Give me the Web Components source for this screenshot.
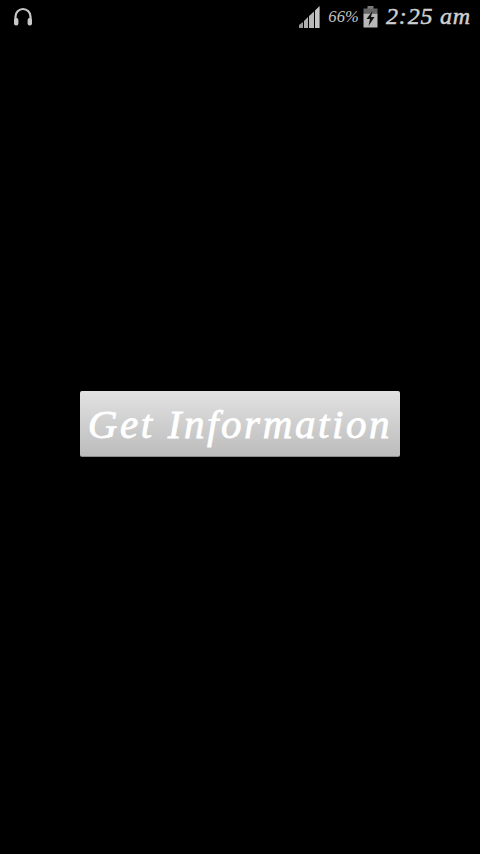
<!DOCTYPE html>
<html>
<head>
<meta charset="utf-8">
<title>Get Information</title>
<style>
html, body { margin: 0; padding: 0; background: #000; }
</style>
</head>
<body>
<app-screen>
    <status-bar></status-bar>
    <info-button>Get Information</info-button>
</app-screen>

<script>
class AppScreen extends HTMLElement {
    constructor() {
        super();
        this.attachShadow({ mode: 'open' });
        this.shadowRoot.innerHTML = `
            <style>
                :host {
                    display: flex;
                    flex-direction: column;
                    width: 480px;
                    height: 854px;
                    background: #000;
                    overflow: hidden;
                }
                .main {
                    display: flex;
                    justify-content: center;
                    padding-top: 358px;
                }
            </style>
            <slot></slot>
            <div class="main"><slot name="content"></slot></div>
        `;
    }

    connectedCallback() {
        const button = this.querySelector('info-button');
        if (button) button.slot = 'content';
    }
}

class StatusBar extends HTMLElement {
    constructor() {
        super();
        this.attachShadow({ mode: 'open' });
        this.shadowRoot.innerHTML = `
            <style>
                :host {
                    display: flex;
                    align-items: center;
                    height: 33px;
                    padding: 0 9px 0 13px;
                    color: #c4c4c4;
                    font-family: "Liberation Serif", serif;
                    font-style: italic;
                }
                svg { display: block; flex: none; }
                .spacer { flex: 1; }
                .percent { font-size: 16.5px; margin: 0 4px 0 8px; letter-spacing: 0.2px; }
                .time { font-size: 24px; margin-left: 8px; letter-spacing: 0.8px; color: #cfcfcf; white-space: nowrap; -webkit-text-stroke: 0.5px #cfcfcf; }
            </style>
            <svg width="20" height="20" viewBox="0 0 20 20" fill="none">
                <path d="M2.5 13 V9.5 a7.5 7.5 0 0 1 15 0 V13" stroke="#c8c8c8" stroke-width="2.2"/>
                <rect x="1" y="11" width="4.4" height="7.4" rx="2" fill="#c8c8c8"/>
                <rect x="14.6" y="11" width="4.4" height="7.4" rx="2" fill="#c8c8c8"/>
            </svg>
            <div class="spacer"></div>
            <svg width="21" height="22" viewBox="0 0 21 22">
                <path d="M0 22 V19 L4 16 V22 Z" fill="#9a9a9a"/>
                <path d="M5 22 V15 L9 11 V22 Z" fill="#b0b0b0"/>
                <path d="M10 22 V10 L15 5.5 V22 Z" fill="#b8b8b8"/>
                <path d="M16 22 V4.5 L20.6 0 V22 Z" fill="#c4c4c4"/>
            </svg>
            <span class="percent">66%</span>
            <svg width="15" height="22" viewBox="0 0 15 22">
                <rect x="4.5" y="0" width="6" height="3" fill="#7a7a7a"/>
                <rect x="0.5" y="2.5" width="14" height="5" fill="#666"/>
                <rect x="0.5" y="7.5" width="14" height="14" fill="#b8b8b8"/>
                <path d="M9.5 5 L3.5 13 H7 L5.5 20 L11.5 11 H8 Z" fill="#111"/>
            </svg>
            <span class="time">2:25 am</span>
        `;
    }
}

class InfoButton extends HTMLElement {
    constructor() {
        super();
        this.attachShadow({ mode: 'open' });
        this.shadowRoot.innerHTML = `
            <style>
                :host {
                    display: flex;
                    align-items: center;
                    justify-content: center;
                    box-sizing: border-box;
                    width: 320px;
                    height: 66px;
                    border-radius: 2px;
                    background: linear-gradient(#e2e2e2, #bcbcbc);
                    border-bottom: 1px solid #8c8c8c;
                    color: #fff;
                    font-family: "Liberation Serif", serif;
                    font-style: italic;
                    font-size: 41px;
                    letter-spacing: 2.6px;
                    -webkit-text-stroke: 0.8px #fff;
                    white-space: nowrap;
                    cursor: pointer;
                }
            </style>
            <slot></slot>
        `;
    }
}

customElements.define('app-screen', AppScreen);
customElements.define('status-bar', StatusBar);
customElements.define('info-button', InfoButton);
</script>
</body>
</html>
